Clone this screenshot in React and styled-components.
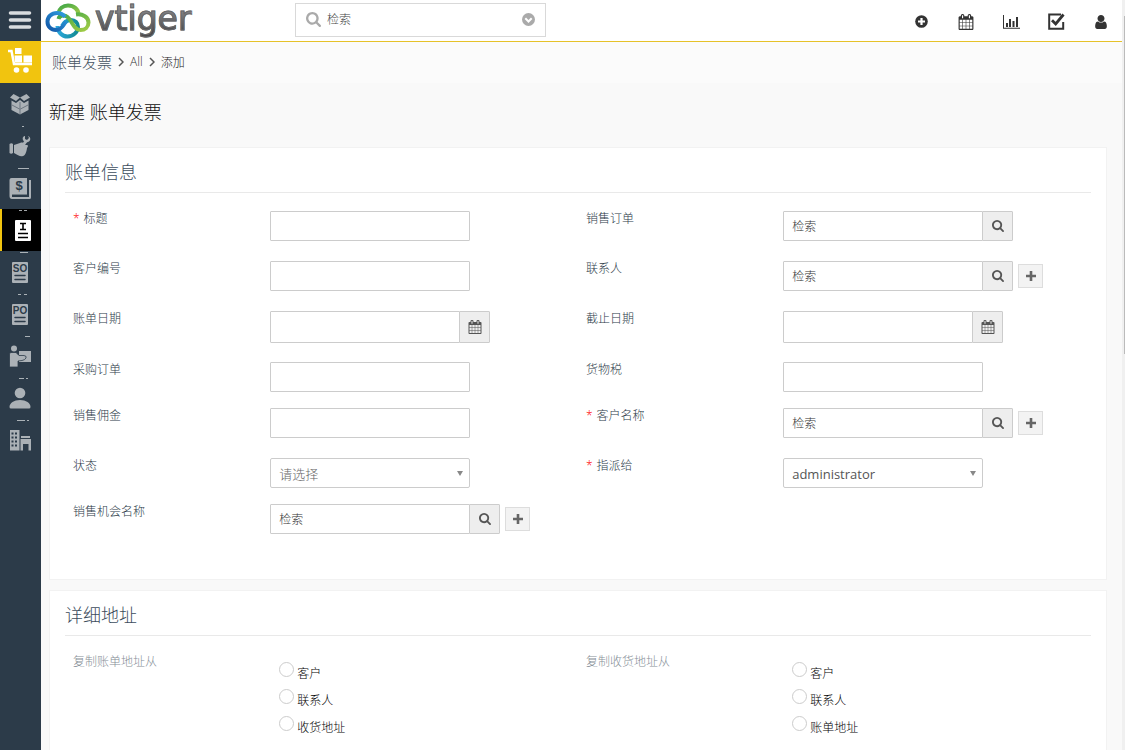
import React from "react"
import styled, { createGlobalStyle } from 'styled-components'


const GlobalStyle = createGlobalStyle`
    * {
        box-sizing: border-box;
    }
    body {
        margin: 0;
        background: #f9f9f9;
        font-family: "Open Sans", "Noto Sans CJK SC", sans-serif;
        font-size: 12px;
        font-weight: 300;
        color: #222;
    }
    input, select, button {
        font-family: inherit;
        font-weight: inherit;
        margin: 0;
    }
`

const Shell = styled.div`
    display: flex;
    height: 100vh;
    overflow: hidden;
`
const Sidebar = styled.nav`
    flex: 0 0 41px;
    min-width: 0;
    background: #2c3b49;
    display: flex;
    flex-direction: column;
`
const MenuButton = styled.button`
    height: 41px;
    padding: 0;
    border: 0;
    background: transparent;
    display: block;
`
const SidebarLink = styled.a`
    display: block;
    height: 42px;
    overflow: hidden;
    color: ${({ $color }) => $color || "#abb1b6"};
    background: ${({ $background }) => $background || "transparent"};
    border-left: ${({ $active }) => ($active ? "2px solid #f1c40f" : "0")};

    svg {
        display: block;
    }
`
const Page = styled.div`
    flex: 1;
    min-width: 0;
    display: flex;
    flex-direction: column;
`
const Header = styled.header`
    flex: 0 0 42px;
    background: #fff;
    border-bottom: 1px solid #e6c229;
    display: flex;
    align-items: center;
`
const Logo = styled.a`
    flex: 0 0 254px;
    height: 38px;
    padding-left: 4px;
    display: flex;
    align-items: center;
    text-decoration: none;
`
const LogoText = styled.span`
    margin: 0 0 4px 4px;
    font-family: "DejaVu Sans", sans-serif;
    font-size: 33px;
    font-weight: 400;
    line-height: 38px;
    color: transparent;
    background: linear-gradient(#8b8b8d 20%, #4a4a4c 85%);
    background-clip: text;
    -webkit-text-stroke: 1px #68686a;
`
const GlobalSearch = styled.label`
    flex: 0 1 251px;
    height: 34px;
    margin-bottom: 2px;
    padding: 0 10px;
    border: 1px solid #d9d9d9;
    display: flex;
    align-items: center;
    gap: 6px;
    color: #aaa;

    input {
        flex: 1;
        min-width: 0;
        padding: 0;
        border: 0;
        outline: 0;
        font-size: 12px;
        background: transparent;
    }
    input::placeholder {
        color: #444;
    }
`
const HeaderActions = styled.div`
    margin-left: auto;
    padding: 2px 11px 0 0;
    display: flex;
    gap: 25px;
`
const IconButton = styled.button`
    min-width: 20px;
    height: 20px;
    padding: 0;
    border: 0;
    background: transparent;
    color: #333;
    display: flex;
    align-items: center;
    justify-content: center;
`
const Breadcrumb = styled.div`
    flex: 0 0 41px;
    padding: 0 11px 2px;
    background: #fbfbfb;
    display: flex;
    align-items: center;
    gap: 6px;
    color: #222;

    a {
        color: #333;
        text-decoration: none;
    }
    a:first-child {
        font-size: 15px;
        color: #445362;
    }
`
const Content = styled.main`
    padding: 0 15px 0 8px;
`
const PageTitle = styled.h1`
    margin: 0;
    height: 64px;
    font-size: 18px;
    line-height: 58px;
    font-weight: 300;
    color: #111;
`
const Card = styled.section`
    margin-bottom: 10px;
    padding: 0 15px 29px;
    background: #fff;
    border: 1px solid #f2f2f2;
`
const CardTitle = styled.h2`
    margin: 0 0 18px;
    height: 45px;
    border-bottom: 1px solid #e9e9e9;
    font-size: 18px;
    line-height: 48px;
    font-weight: 300;
    color: #3d4d5d;
`
const Row = styled.div`
    display: grid;
    grid-template-columns: 20% 30% 20% 30%;
    align-items: start;
    padding-bottom: ${({ $space }) => $space}px;
`
const Label = styled.label`
    padding-left: 8px;
    line-height: 16px;
    color: ${({ $muted }) => ($muted ? "#858e96" : "#2c3b49")};
`
const Required = styled.span`
    color: #f00;
    margin-right: 4px;
`
const Control = styled.div`
    display: flex;
    align-items: center;
`
const TextInput = styled.input`
    width: ${({ $width }) => $width || 200}px;
    height: ${({ $height }) => $height || 30}px;
    padding: 0 8px;
    border: 1px solid #ccc;
    border-radius: 1px;
    background: #fff;
    font-size: 12px;
    color: #444;

    &::placeholder {
        color: #333;
    }
`
const Addon = styled.button`
    width: 31px;
    height: ${({ $height }) => $height || 30}px;
    margin-left: -1px;
    padding: 0;
    border: 1px solid #ccc;
    border-radius: 1px;
    background: #eee;
    color: #555;
    display: flex;
    align-items: center;
    justify-content: center;
`
const AddButton = styled.button`
    width: 25px;
    height: 24px;
    margin-left: 5px;
    padding: 0;
    border: 1px solid #ddd;
    background: #f3f3f3;
    color: #666;
    display: flex;
    align-items: center;
    justify-content: center;
`
const SelectWrap = styled.div`
    position: relative;
    width: 200px;

    svg {
        position: absolute;
        right: 6px;
        top: 12px;
        pointer-events: none;
    }
`
const SelectInput = styled.select`
    display: block;
    width: 100%;
    height: 30px;
    padding: 2px 20px 0 8px;
    appearance: none;
    border: 1px solid #ccc;
    border-radius: 2px;
    background: #fff;
    font-size: 13px;
    font-weight: ${({ $muted }) => ($muted ? 300 : 400)};
    color: ${({ $muted }) => ($muted ? "#666" : "#555")};
`
const RadioGroup = styled.div`
    padding: 8px 0 0 9px;
    display: flex;
    flex-direction: column;
`
const RadioLabel = styled.label`
    height: 27px;
    display: flex;
    gap: 3px;
    line-height: 23px;
    color: #000;

    input {
        appearance: none;
        width: 15px;
        height: 15px;
        margin: 0;
        border: 1px solid #ccc;
        border-radius: 50%;
        background: #fff;
    }
    input:checked {
        background: #999;
    }
`
const ScrollTrack = styled.div`
    flex: 0 0 3px;
    padding: 16px 0 0 2px;
    background: #f0f0f0;
`
const ScrollThumb = styled.div`
    height: 46%;
    background: #bbb;
`

const SearchIcon = ({ size = 12 }) => (
    <svg width={size} height={size} viewBox="64 128 1664 1664" fill="currentColor">
        <path d="M1216 832q0-185-131.5-316.5t-316.5-131.5-316.5 131.5-131.5 316.5 131.5 316.5 316.5 131.5 316.5-131.5 131.5-316.5zm512 832q0 52-38 90t-90 38q-54 0-90-38l-343-342q-179 124-399 124-143 0-273.5-55.5t-225-150-150-225-55.5-273.5 55.5-273.5 150-225 225-150 273.5-55.5 273.5 55.5 225 150 150 225 55.5 273.5q0 220-124 399l343 343q37 37 37 90z" />
    </svg>
)

const CalendarIcon = ({ size = 14 }) => (
    <svg width={size} height={size} viewBox="0 0 1792 1792" fill="currentColor">
        <path d="M192 1664h288v-288h-288v288zm352 0h320v-288h-320v288zm-352-352h288v-320h-288v320zm352 0h320v-320h-320v320zm-352-384h288v-288h-288v288zm736 736h320v-288h-320v288zm-384-736h320v-288h-320v288zm768 736h288v-288h-288v288zm-384-352h320v-320h-320v320zm-352-864v-288q0-13-9.5-22.5t-22.5-9.5h-64q-13 0-22.5 9.5t-9.5 22.5v288q0 13 9.5 22.5t22.5 9.5h64q13 0 22.5-9.5t9.5-22.5zm736 864h288v-320h-288v320zm-384-384h320v-288h-320v288zm384 0h288v-288h-288v288zm32-480v-288q0-13-9.5-22.5t-22.5-9.5h-64q-13 0-22.5 9.5t-9.5 22.5v288q0 13 9.5 22.5t22.5 9.5h64q13 0 22.5-9.5t9.5-22.5zm384-64v1280q0 52-38 90t-90 38h-1408q-52 0-90-38t-38-90v-1280q0-52 38-90t90-38h128v-96q0-66 47-113t113-47h64q66 0 113 47t47 113v96h384v-96q0-66 47-113t113-47h64q66 0 113 47t47 113v96h128q52 0 90 38t38 90z" />
    </svg>
)

const UserIcon = () => (
    <svg width="12" height="14" viewBox="256 128 1280 1536" fill="currentColor">
        <path d="M1536 1399q0 109-62.5 187t-150.5 78h-854q-88 0-150.5-78t-62.5-187q0-85 8.5-160.5t31.5-152 58.5-131 94-89 134.5-34.5q131 128 313 128t313-128q76 0 134.5 34.5t94 89 58.5 131 31.5 152 8.5 160.5zm-256-887q0 159-112.5 271.5t-271.5 112.5-271.5-112.5-112.5-271.5 112.5-271.5 271.5-112.5 271.5 112.5 112.5 271.5z" />
    </svg>
)

const PlusCircleIcon = () => (
    <svg width="13" height="13" viewBox="0 0 13 13">
        <circle cx="6.5" cy="6.5" r="6.3" fill="currentColor" />
        <path d="M6.5 3v7M3 6.5h7" stroke="#fff" strokeWidth="2.2" />
    </svg>
)

const ChartIcon = () => (
    <svg width="17" height="14" viewBox="0 0 17 14" fill="currentColor">
        <path d="M0 0h1v12.8h16v1H0zM3 8h2v4H3zM6 4h2v8H6zM9.500 6h2v6h-2zM13 2h2v10h-2z" />
    </svg>
)

const CheckIcon = () => (
    <svg width="17" height="17" viewBox="0 0 17 17" fill="none" stroke="currentColor">
        <path d="M12 1.500H1.200v14.300h14V9" strokeWidth="2" />
        <path d="M12 1.500h1" strokeWidth="2" />
        <path d="M4 7.200l3.700 3.800L15.500 1.500" strokeWidth="2.800" />
    </svg>
)

const ChevronCircleIcon = () => (
    <svg width="13" height="13" viewBox="0 0 13 13">
        <circle cx="6.500" cy="6.500" r="6.500" fill="#aaa" />
        <path d="M3.300 5.300l3.200 3.200 3.200-3.200" fill="none" stroke="#fff" strokeWidth="2" />
    </svg>
)

const PlusIcon = () => (
    <svg width="10" height="10" viewBox="0 0 10 10">
        <path d="M5 0v10M0 5h10" stroke="currentColor" strokeWidth="2.600" />
    </svg>
)

const ArrowIcon = () => (
    <svg width="8" height="7" viewBox="0 0 8 7">
        <path d="M1 1h6L4 6z" fill="#888" />
    </svg>
)

const ChevronIcon = () => (
    <svg width="6" height="10" viewBox="0 0 6 10">
        <path d="M1 1l4 4-4 4" fill="none" stroke="#555" strokeWidth="1.500" />
    </svg>
)

const CloudLogo = () => (
    <svg width="46" height="36" viewBox="0 0 46 36" fill="none" strokeWidth="4">
        <defs>
            <linearGradient id="blue" x1="0" y1="1" x2="1" y2="0">
                <stop offset="0" stopColor="#1257a8" />
                <stop offset="1" stopColor="#2f9fe0" />
            </linearGradient>
            <linearGradient id="green" x1="0" y1="0" x2="1" y2="1">
                <stop offset="0" stopColor="#3fa648" />
                <stop offset="1" stopColor="#a3cc45" />
            </linearGradient>
            <linearGradient id="teal" x1="0" y1="0" x2="1" y2="0">
                <stop offset="0" stopColor="#2aa7dc" />
                <stop offset="1" stopColor="#128a92" />
            </linearGradient>
        </defs>
        <path d="M12.500 23c0 6 4.500 10.500 10 10.500S33 29 33 24c0-4-3-7-7-7-5 0-7 3-9 6" stroke="url(#teal)" />
        <path d="M13 11c1-5 5-8.500 10-8.500 6 0 10.500 4 10.500 9" stroke="url(#green)" />
        <path d="M31 11.500c7-1 12.500 3 12.500 8 0 4.500-3.500 7.500-8 7.500-7 0-8-9-13-13-3-2.500-8-2-9 2" stroke="url(#green)" />
        <path d="M20 14c-2-3-5-4-8-4-5.500 0-9.500 4-9.500 8.500 0 5 3.500 8.500 8.500 8.500 6 0 7-5 10-8.500" stroke="url(#blue)" />
    </svg>
)

// thin ticks at the top are the cut-off module names
const documentIcon = (text, ink) => (
    <>
        <rect x="12" y="11" width="16" height="21" rx="1" />
        <text x="20" y="21" fill={ink} textAnchor="middle" fontFamily="Liberation Sans, sans-serif" fontSize="10" fontWeight="700">{text}</text>
        <path d="M15 24.500h10M15 28.500h10" stroke={ink} strokeWidth="1.500" strokeLinecap="round" />
    </>
)

const modules = [
    {
        name: "Inventory", color: "#fff", background: "#f1c40f",
        icon: (
            <>
                <path d="M15 7h6.500v6H15zM14.500 14.500h7.500v7h-7zM23.500 14.500H32v7h-8.500z" />
                <path d="M8 10h3.500l2.500 13h18" fill="none" stroke="currentColor" strokeWidth="2.500" />
                <circle cx="16.500" cy="29" r="2.800" />
                <circle cx="26" cy="29" r="2.800" />
            </>
        )
    },
    {
        name: "Products",
        icon: (
            <>
                <path d="M13.500 11l6.500 3.500-4 3.500-6-3.500zM26.500 11L20 14.500l4 3.500 6-3.500z" />
                <path d="M11.500 17.500l4.500 2.500 4-3 4 3 4.500-2.500v9.500L20 31.500 11.500 27z" />
                <path d="M20 19v12M12 22l7.500 4M28 22l-7.500 4" stroke="#2c3b49" strokeWidth="0.500" />
            </>
        )
    },
    {
        name: "Services", tick: "M22 1.500h2",
        icon: (
            <>
                <path d="M9.500 19q2-1.500 3.500 0v9q-2 1.500-3.500 0zM14 20l6-2c3-1 5 0 4 2h3c1.500 0 1 2 0 3-.5 4-2 8-4 8-3 1-5-1-9-3z" />
                <path d="M22 22l4-6" stroke="currentColor" strokeWidth="3" />
                <path d="M23 15c-1-3 1-4 2-4v3l2 1 2-2-1-2c3 1 3 5 0 6-2 1-4 0-5-2z" />
            </>
        )
    },
    {
        name: "Price Books", tick: "M18 1.500h11",
        icon: (
            <>
                <path d="M11.500 11H27v18H12v1h17V13h2v17.500q0 1.500-1.500 1.500H12q-2.500 0-2.500-3V13q0-2 2-2z" />
                <path d="M12 28.300h15" stroke="#2c3b49" strokeWidth="1.500" />
                <text x="19" y="23" fill="#2c3b49" textAnchor="middle" fontFamily="Liberation Sans, sans-serif" fontSize="13" fontWeight="700">$</text>
            </>
        )
    },
    {
        name: "Invoice", color: "#fff", background: "#000", active: true, tick: "M17 1.500h3M22 1.500h3",
        icon: (
            <>
                <rect x="13" y="11" width="16" height="21" rx="1" />
                <path d="M18 14.500h6M21 14v7M18 20.500h6M16 24.500h10M16 28.500h10" stroke="#000" strokeWidth="1.600" />
            </>
        )
    },
    { name: "Sales Orders", tick: "M20 1.500h8", icon: documentIcon("SO", "#2c3b49") },
    { name: "Purchase Orders", tick: "M18 1.500h3M24 1.500h3", icon: documentIcon("PO", "#2c3b49") },
    {
        name: "Vendors", tick: "M25 1.500h5",
        icon: (
            <>
                <circle cx="14" cy="13.500" r="3" />
                <path d="M19 16h12v11H19z" />
                <path d="M9.500 19q0-1.500 1.500-1.500h5l3 3h5q3 .5 2 2.500-1 2-4 2.500l-4 .5v6H9.500z" stroke="#2c3b49" strokeWidth="0.800" />
            </>
        )
    },
    {
        name: "Contacts", tick: "M19 1.500h5M26 1.500h2",
        icon: (
            <>
                <circle cx="20" cy="16" r="5.300" />
                <path d="M9.500 30c0-4 4.500-7 10.500-7s10.500 3 10.500 7q0 1.500-1.500 1.500H11q-1.500 0-1.500-1.500z" />
            </>
        )
    },
    {
        name: "Organizations", tick: "M17 1.500h8M27 1.500h2",
        icon: (
            <>
                <path d="M10 11h9.500v20.500H10z" />
                <path d="M11.500 14.500H18M11.500 18.500H18M11.500 22.500H18M11.500 26.500H18" stroke="#2c3b49" strokeWidth="2.200" strokeDasharray="2 1.500" />
                <path d="M21 17h9v2h-9zM20.500 20H31v11.500h-2.500V25H23v6.500h-2.500z" />
            </>
        )
    },
]

const Lookup = ({ id, label, add }) => (
    <Control>
        <TextInput id={id} placeholder="检索" />
        <Addon type="button" aria-label={label}><SearchIcon /></Addon>
        {add && <AddButton type="button" aria-label={label}><PlusIcon /></AddButton>}
    </Control>
)

const DateInput = ({ id, label }) => (
    <Control>
        <TextInput id={id} $width={190} $height={32} />
        <Addon type="button" aria-label={label} $height={32}><CalendarIcon /></Addon>
    </Control>
)

const Select = ({ id, value, muted }) => (
    <SelectWrap>
        <SelectInput id={id} $muted={muted}>
            <option>{value}</option>
        </SelectInput>
        <ArrowIcon />
    </SelectWrap>
)

const Field = ({ id, label, type, required, value }) => (
    <>
        <Label htmlFor={id}>
            {required && <Required>*</Required>}
            {label}
        </Label>
        {type === "lookup" && <Lookup id={id} label={label} />}
        {type === "lookupAdd" && <Lookup id={id} label={label} add />}
        {type === "date" && <DateInput id={id} label={label} />}
        {type === "select" && <Select id={id} value={value} muted={value === "请选择"} />}
        {!type && <Control><TextInput id={id} /></Control>}
    </>
)

const rows = [
    { space: 20, fields: [
        { id: "subject", label: "标题", required: true },
        { id: "salesorder", label: "销售订单", type: "lookup" },
    ] },
    { space: 20, fields: [
        { id: "customerno", label: "客户编号" },
        { id: "contact", label: "联系人", type: "lookupAdd" },
    ] },
    { space: 19, fields: [
        { id: "invoicedate", label: "账单日期", type: "date" },
        { id: "duedate", label: "截止日期", type: "date" },
    ] },
    { space: 16, fields: [
        { id: "purchaseorder", label: "采购订单" },
        { id: "excise", label: "货物税" },
    ] },
    { space: 20, fields: [
        { id: "commission", label: "销售佣金" },
        { id: "account", label: "客户名称", type: "lookupAdd", required: true },
    ] },
    { space: 16, fields: [
        { id: "status", label: "状态", type: "select", value: "请选择" },
        { id: "assigned", label: "指派给", type: "select", value: "administrator", required: true },
    ] },
    { space: 16, fields: [
        { id: "potential", label: "销售机会名称", type: "lookupAdd" },
    ] },
]

const CopyAddress = ({ name, label, options }) => (
    <>
        <Label as="span" id={name} $muted>{label}</Label>
        <RadioGroup role="radiogroup" aria-labelledby={name}>
            {options.map((option) => (
                <RadioLabel key={option}>
                    <input type="radio" name={name} />
                    {option}
                </RadioLabel>
            ))}
        </RadioGroup>
    </>
)

const App = () => (
    <Shell>
        <GlobalStyle />
        <Sidebar>
            <MenuButton type="button" aria-label="Menu">
                <svg width="41" height="41" viewBox="0 0 41 41">
                    <path d="M10.500 13h19M10.500 20h19M10.500 27h19" stroke="#d9dcde" strokeWidth="3.600" strokeLinecap="round" />
                </svg>
            </MenuButton>
            {modules.map(({ name, color, background, active, tick, icon }) => (
                <SidebarLink key={name} href="#" aria-label={name} $color={color} $background={background} $active={active}>
                    <svg width="41" height="42" viewBox="0 0 41 42" fill="currentColor">
                        {tick && <path d={tick} stroke="#ccd0d3" strokeWidth="0.800" />}
                        {icon}
                    </svg>
                </SidebarLink>
            ))}
        </Sidebar>
        <Page>
            <Header>
                <Logo href="#">
                    <CloudLogo />
                    <LogoText>vtiger</LogoText>
                </Logo>
                <GlobalSearch>
                    <SearchIcon size={15} />
                    <input placeholder="检索" aria-label="检索" />
                    <ChevronCircleIcon />
                </GlobalSearch>
                <HeaderActions>
                    <IconButton type="button" aria-label="Quick create"><PlusCircleIcon /></IconButton>
                    <IconButton type="button" aria-label="Calendar"><CalendarIcon size={16} /></IconButton>
                    <IconButton type="button" aria-label="Reports"><ChartIcon /></IconButton>
                    <IconButton type="button" aria-label="Tasks"><CheckIcon /></IconButton>
                    <IconButton type="button" aria-label="User"><UserIcon /></IconButton>
                </HeaderActions>
            </Header>
            <Breadcrumb>
                <a href="#">账单发票</a>
                <ChevronIcon />
                <a href="#">All</a>
                <ChevronIcon />
                <span>添加</span>
            </Breadcrumb>
            <Content>
                <PageTitle>新建 账单发票</PageTitle>
                <Card>
                    <CardTitle>账单信息</CardTitle>
                    {rows.map(({ space, fields }) => (
                        <Row key={fields[0].id} $space={space}>
                            {fields.map((field) => <Field key={field.id} {...field} />)}
                        </Row>
                    ))}
                </Card>
                <Card>
                    <CardTitle>详细地址</CardTitle>
                    <Row $space={20}>
                        <CopyAddress name="copybilling" label="复制账单地址从" options={["客户", "联系人", "收货地址"]} />
                        <CopyAddress name="copyshipping" label="复制收货地址从" options={["客户", "联系人", "账单地址"]} />
                    </Row>
                </Card>
            </Content>
        </Page>
        <ScrollTrack>
            <ScrollThumb />
        </ScrollTrack>
    </Shell>
)

export default App
